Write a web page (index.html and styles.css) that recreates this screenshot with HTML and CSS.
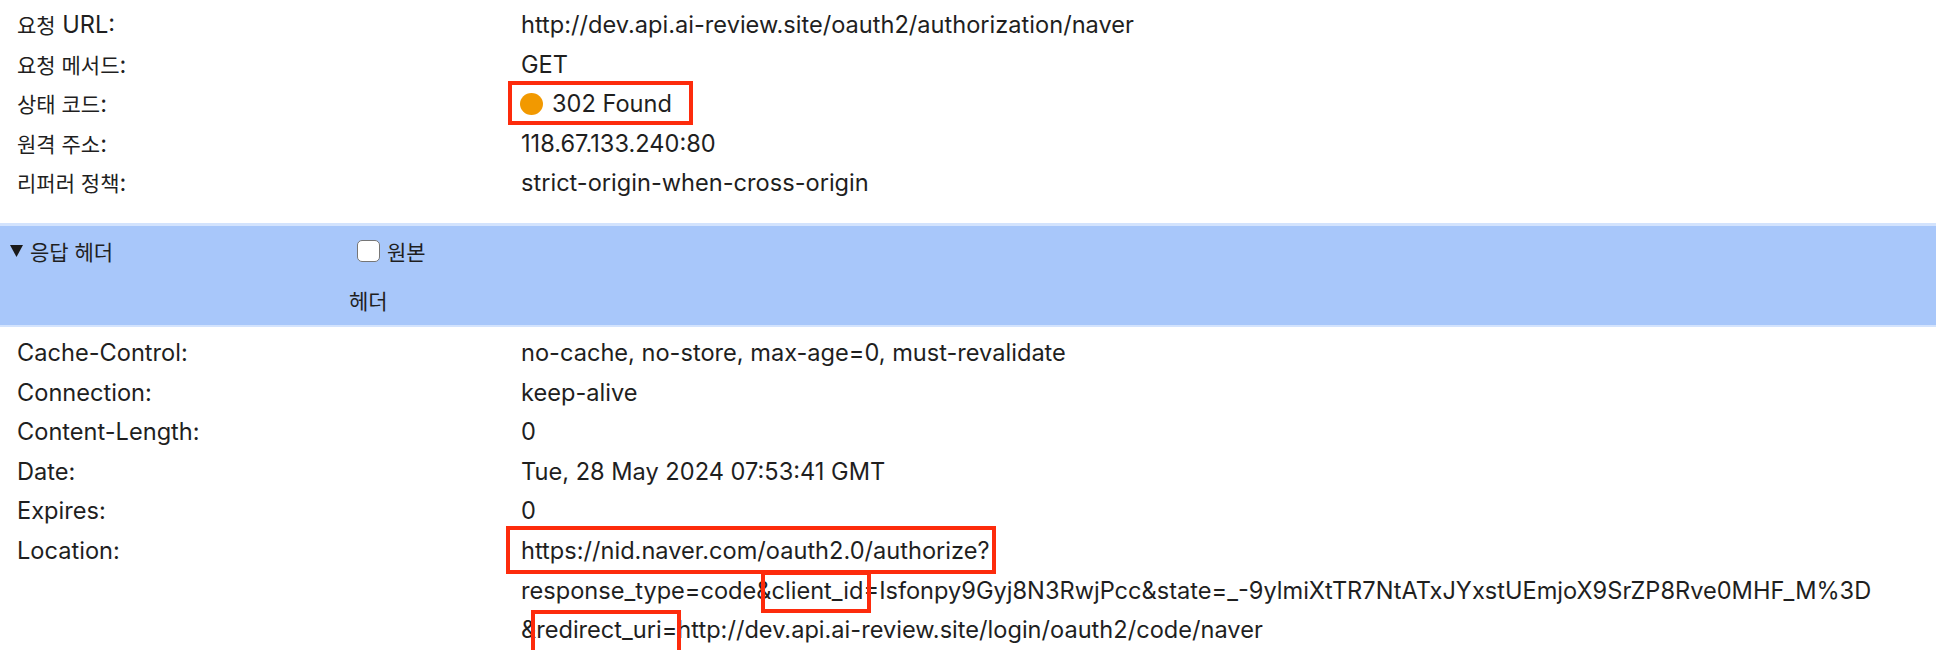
FILE: index.html
```html
<!DOCTYPE html>
<html lang="ko">
<head>
<meta charset="utf-8">
<title>Headers</title>
<link rel="stylesheet" href="styles.css">
</head>
<body>
<div class="general">
  <div class="row"><div class="name"><span class="ko">요청</span> URL:</div><div class="value">http://dev.api.ai-review.site/oauth2/authorization/naver</div></div>
  <div class="row"><div class="name"><span class="ko">요청 메서드</span>:</div><div class="value">GET</div></div>
  <div class="row"><div class="name"><span class="ko">상태 코드</span>:</div><div class="value"><span class="status mark"><span class="dot"></span>302 Found</span></div></div>
  <div class="row"><div class="name"><span class="ko">원격 주소</span>:</div><div class="value">118.67.133.240:80</div></div>
  <div class="row"><div class="name"><span class="ko">리퍼러 정책</span>:</div><div class="value">strict-origin-when-cross-origin</div></div>
</div>

<div class="band">
  <div class="toggle"><svg class="tri" width="13" height="12" viewBox="0 0 13 12"><polygon points="0,0 13,0 6.5,12" fill="#1a1a1a"/></svg><span class="ko">응답 헤더</span></div>
  <div class="raw"><span class="cb"></span><span class="ko">원본</span></div>
  <div class="spacer"></div>
  <div class="raw-2"><span class="ko">헤더</span></div>
</div>

<div class="headers">
  <div class="row"><div class="name">Cache-Control:</div><div class="value">no-cache, no-store, max-age=0, must-revalidate</div></div>
  <div class="row"><div class="name">Connection:</div><div class="value">keep-alive</div></div>
  <div class="row"><div class="name">Content-Length:</div><div class="value">0</div></div>
  <div class="row"><div class="name">Date:</div><div class="value">Tue, 28 May 2024 07:53:41 GMT</div></div>
  <div class="row"><div class="name">Expires:</div><div class="value">0</div></div>
  <div class="row"><div class="name">Location:</div><div class="value">
    <div class="line"><span class="loc mark">https://nid.naver.com/oauth2.0/authorize?</span></div>
    <div class="line">response_type=code&amp;<span class="cid mark">client_id</span>=Isfonpy9Gyj8N3RwjPcc&amp;state=_-9ylmiXtTR7NtATxJYxstUEmjoX9SrZP8Rve0MHF_M%3D</div>
    <div class="line">&amp;<span class="ruri mark">redirect_uri=</span>http://dev.api.ai-review.site/login/oauth2/code/naver</div>
  </div></div>
</div>
</body>
</html>
```
FILE: styles.css
```css
html, body {
  margin: 0;
  padding: 0;
  background: #ffffff;
}
body {
  font-family: Inter, "Noto Sans CJK KR", sans-serif;
  font-size: 23.6px;
  color: #1f1f1f;
  line-height: 39.6px;
  overflow: hidden;
}
.ko {
  font-family: "Noto Sans CJK KR", sans-serif;
  font-size: 21px;
  line-height: 1;
}
.general {
  padding-top: 5px;
  margin-bottom: 20px;
}
.headers {
  padding-top: 6px;
}
.row {
  display: grid;
  grid-template-columns: 504px 1fr;
  padding-left: 17px;
}
.general .row {
  height: 39.6px;
}
.name, .value {
  white-space: nowrap;
}
.line {
  height: 39.6px;
}
.mark {
  position: relative;
}
.mark::after {
  content: "";
  position: absolute;
  border: 4px solid #fd2b0c;
  pointer-events: none;
}
.status {
  margin-left: -1px;
}
.status::after {
  top: -8px;
  bottom: -7px;
  left: -12px;
  right: -21px;
}
.dot {
  display: inline-block;
  width: 23px;
  height: 22px;
  border-radius: 50%;
  background: #f29900;
  vertical-align: -3px;
  margin-right: 9px;
}
.loc::after {
  top: -10px;
  bottom: -9px;
  left: -15px;
  right: -6px;
}
.cid::after {
  top: -5px;
  bottom: -8px;
  left: -10px;
  right: -7px;
}
.ruri::after {
  top: -5px;
  bottom: -20px;
  left: -5px;
  right: -4px;
}
.band {
  display: grid;
  grid-template-columns: 349px 1fr;
  grid-template-rows: 51px 48px;
  background: #a8c7fa;
  border-top: 3px solid #d3e3fd;
  border-bottom: 2px solid #d3e3fd;
  line-height: 1;
}
.toggle {
  display: flex;
  align-items: center;
  padding-left: 10px;
  gap: 7px;
}
.raw {
  display: flex;
  align-items: center;
  padding-left: 8px;
  gap: 7px;
}
.cb {
  display: block;
  box-sizing: border-box;
  width: 23px;
  height: 22px;
  border: 1.5px solid #767676;
  border-radius: 5px;
  background: #ffffff;
}
.raw-2 {
  display: flex;
  align-items: center;
}
```
